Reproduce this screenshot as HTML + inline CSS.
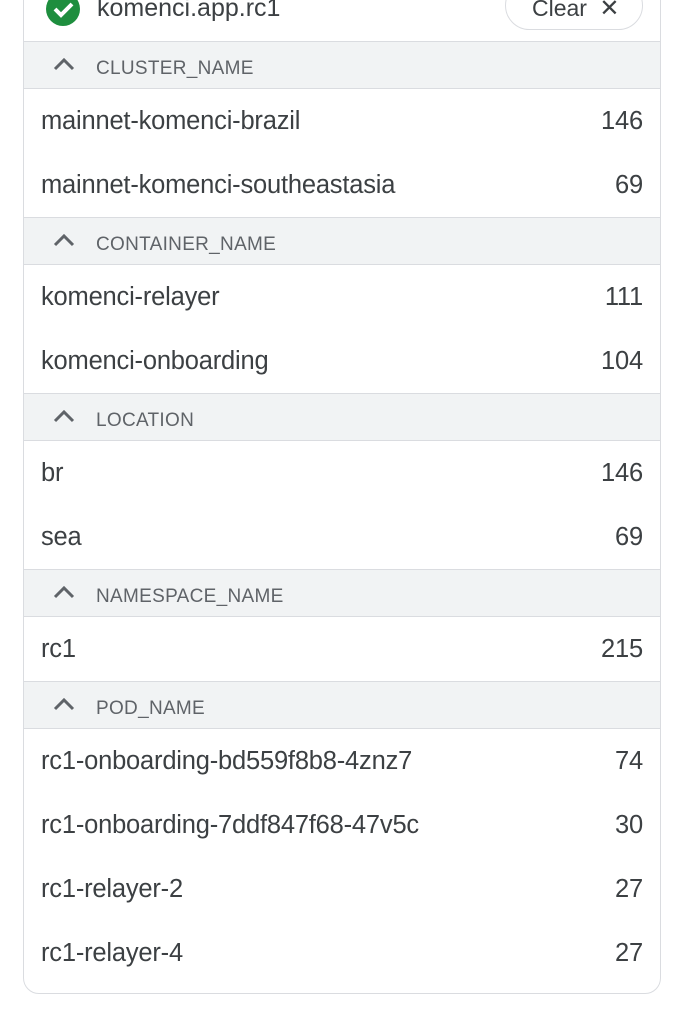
<!DOCTYPE html>
<html><head><style>
body{margin:0;width:684px;height:1018px;background:#fff;font-family:"Liberation Sans",Arial,sans-serif;overflow:hidden;position:relative}
.card{position:absolute;left:23px;top:-30px;width:636px;height:1022px;border:1px solid #dadce0;border-radius:16px;box-sizing:content-box}
.hd{height:46px;background:#f1f3f4;border-top:1px solid #dadce0;border-bottom:1px solid #dadce0;display:flex;align-items:center;font-size:19px;color:#5f6368;letter-spacing:.3px;box-sizing:border-box;height:48px}
.hd span{position:relative;top:4px}
.hd svg{margin-left:28px;margin-right:20px;position:relative;top:-1px}
.row{height:64px;display:flex;align-items:center;justify-content:space-between;padding:0 17px 0 17px;font-size:25.5px;color:#3c4043;letter-spacing:-.2px}
</style></head><body>
<div class="card">
 <div style="height:70px;position:relative">
  <svg style="position:absolute;left:21px;top:20px" width="36" height="36" viewBox="0 0 36 36"><circle cx="18" cy="18" r="17" fill="#1e8e3e"/><path d="M10 18l6 6 11-11" stroke="#fff" stroke-width="4" fill="none"/></svg>
  <div style="position:absolute;left:73px;top:23px;font-size:25px;color:#3c4043">komenci.app.rc1</div>
  <div style="position:absolute;left:481px;top:10px;width:138px;height:49px;border:1px solid #dadce0;border-radius:25px;box-sizing:border-box;font-size:23px;color:#3c4043;padding:12px 0 0 26px">Clear <span style="font-size:24px;margin-left:6px">✕</span></div>
 </div>
 <div class="hd"><svg width="24" height="14" viewBox="0 0 24 14"><path d="M3 12L12 3l9 9" stroke="#5f6368" stroke-width="3" fill="none"/></svg><span>CLUSTER_NAME</span></div>
 <div class="row"><span>mainnet-komenci-brazil</span><span>146</span></div>
 <div class="row"><span>mainnet-komenci-southeastasia</span><span>69</span></div>
 <div class="hd"><svg width="24" height="14" viewBox="0 0 24 14"><path d="M3 12L12 3l9 9" stroke="#5f6368" stroke-width="3" fill="none"/></svg><span>CONTAINER_NAME</span></div>
 <div class="row"><span>komenci-relayer</span><span>111</span></div>
 <div class="row"><span>komenci-onboarding</span><span>104</span></div>
 <div class="hd"><svg width="24" height="14" viewBox="0 0 24 14"><path d="M3 12L12 3l9 9" stroke="#5f6368" stroke-width="3" fill="none"/></svg><span>LOCATION</span></div>
 <div class="row"><span>br</span><span>146</span></div>
 <div class="row"><span>sea</span><span>69</span></div>
 <div class="hd"><svg width="24" height="14" viewBox="0 0 24 14"><path d="M3 12L12 3l9 9" stroke="#5f6368" stroke-width="3" fill="none"/></svg><span>NAMESPACE_NAME</span></div>
 <div class="row"><span>rc1</span><span>215</span></div>
 <div class="hd"><svg width="24" height="14" viewBox="0 0 24 14"><path d="M3 12L12 3l9 9" stroke="#5f6368" stroke-width="3" fill="none"/></svg><span>POD_NAME</span></div>
 <div class="row"><span>rc1-onboarding-bd559f8b8-4znz7</span><span>74</span></div>
 <div class="row"><span>rc1-onboarding-7ddf847f68-47v5c</span><span>30</span></div>
 <div class="row"><span>rc1-relayer-2</span><span>27</span></div>
 <div class="row"><span>rc1-relayer-4</span><span>27</span></div>
</div>
</body></html>
